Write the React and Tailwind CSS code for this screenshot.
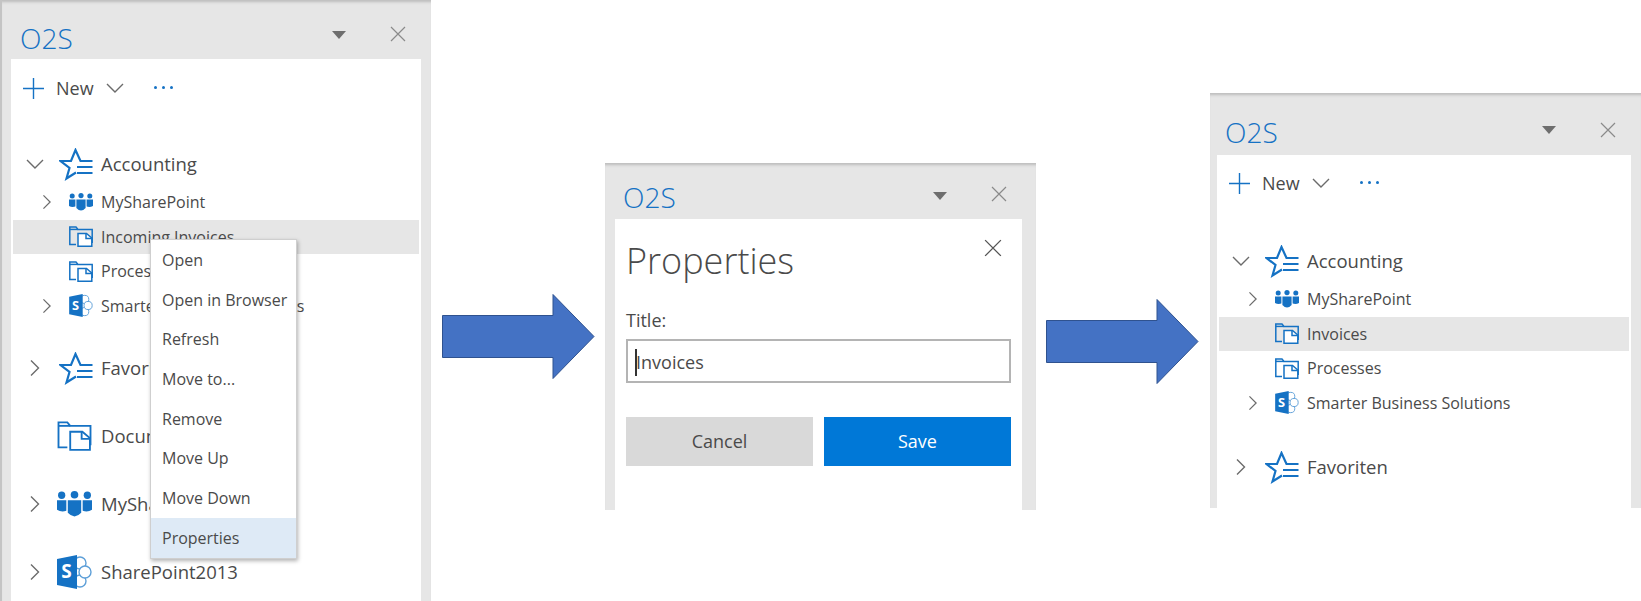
import React from 'react';

const font = { fontFamily: '"Open Sans", "Noto Sans", sans-serif' };

const Chevron = ({ dir = 'right', className = 'w-[18px] h-[18px]' }) => (
  <svg viewBox="0 0 18 18" className={`shrink-0 ${className}`} fill="none" stroke="#6b6b6b" strokeWidth="1.4">
    {dir === 'right' ? <path d="M5 1.5 L12.5 9 L5 16.5" /> : <path d="M1 5 L9 13 L17 5" />}
  </svg>
);

const Cross = ({ size = 16, color = '#8a8a8a' }) => (
  <svg viewBox="0 0 16 16" style={{ width: size, height: size }} fill="none" stroke={color} strokeWidth="1.2">
    <path d="M1 1 L15 15 M15 1 L1 15" />
  </svg>
);

const StarList = () => (
  <svg viewBox="0 0 34 33" className="w-[34px] h-[33px]" fill="none" stroke="#1572c4" strokeWidth="2.2">
    <path d="M33.5 13 H21.5 L16.5 2 L12 13 H1.5 L10.5 20 L7.5 30.5 L17 24.5" />
    <path d="M18 19 H33.5 M18 25 H33.5" />
  </svg>
);

const FolderDoc = ({ big }) => (
  <svg viewBox="0 0 24 21" className={big ? 'w-[35px] h-[30px] -ml-[2px]' : 'w-[24px] h-[21px]'} fill="none" stroke="#1572c4" strokeWidth={big ? 1.3 : 1.5}>
    <path d="M7 18.5 H0.8 V1 H7 L9 3.4 H23.2 V17" />
    <path d="M0.8 3.4 H9" />
    <path d="M9 7.5 H17.5 L22.8 12 V20.2 H9 Z" fill="#fff" />
    <path d="M17 7.5 V12.5 H22.8" />
  </svg>
);

const Team = ({ big }) => (
  <svg viewBox="0 0 24 18" className={big ? 'w-[35px] h-[28px] -ml-[2px]' : 'w-[24px] h-[18px]'} fill="#1572c4">
    <circle cx="3.2" cy="3" r="2.5" />
    <circle cx="12" cy="2.6" r="2.6" />
    <circle cx="20.8" cy="3" r="2.5" />
    <path d="M0 6.5 H6.4 V13.6 Q3 14.8 0 13 Z" />
    <path d="M7.4 6.5 H16.6 V15 Q12 20 7.4 15 Z" />
    <path d="M17.6 6.5 H24 V13 Q21 14.8 17.6 13.6 Z" />
  </svg>
);

const SharePoint = ({ big }) => (
  <svg viewBox="0 0 35 34" className={big ? 'w-[35px] h-[34px] -ml-[2px]' : 'w-[24px] h-[23px]'}>
    <g fill="#fff" stroke="#5d9fd8" strokeWidth="1.4">
      <circle cx="23" cy="8" r="6" />
      <circle cx="23" cy="26" r="6" />
      <circle cx="28" cy="17" r="6" />
    </g>
    <path d="M0 4 L20 0 V34 L0 30 Z" fill="#1572c4" />
    <text x="9.5" y="23" textAnchor="middle" fill="#fff" fontSize="19" fontWeight="700" style={font}>S</text>
  </svg>
);

const TopRow = ({ open, noArrow, icon, label, tall }) => (
  <div className={`flex items-center ${tall ? 'h-[68px]' : 'h-[40px]'}`}>
    <span className="w-[48px] flex pl-[15px]">{!noArrow && <Chevron dir={open ? 'down' : 'right'} />}</span>
    <span className="w-[42px] flex items-center">{icon}</span>
    <span className="text-[18.5px] text-[#4a4a4a] whitespace-nowrap">{label}</span>
  </div>
);

const ChildRow = ({ arrow, icon, label, active }) => (
  <div className={`flex items-center h-[34.5px] ${active ? 'bg-[#e6e6e6]' : ''}`}>
    <span className="w-[56px] flex justify-center pl-[12px]">{arrow && <Chevron className="w-[16px] h-[16px]" />}</span>
    <span className="w-[32px] flex items-center">{icon}</span>
    <span className="text-[16px] text-[#4a4a4a] whitespace-nowrap">{label}</span>
  </div>
);

const Toolbar = ({ sizeClass }) => (
  <div className={`flex items-start pl-[12px] ${sizeClass}`}>
    <svg viewBox="0 0 21 21" className="w-[21px] h-[21px]" fill="none" stroke="#1572c4" strokeWidth="1.4">
      <path d="M10.5 0 V21 M0 10.5 H21" />
    </svg>
    <span className="ml-[12px] text-[18px] leading-[20px] text-[#4a4a4a]">New</span>
    <Chevron dir="down" className="w-[18px] h-[18px] ml-[12px] mt-[1px]" />
    <span className="ml-[30px] mt-[8px] flex gap-[5px]">
      <i className="w-[3px] h-[3px] bg-[#1572c4] rounded-full" />
      <i className="w-[3px] h-[3px] bg-[#1572c4] rounded-full" />
      <i className="w-[3px] h-[3px] bg-[#1572c4] rounded-full" />
    </span>
  </div>
);

const ContextMenu = () => {
  const items = ['Open', 'Open in Browser', 'Refresh', 'Move to...', 'Remove', 'Move Up', 'Move Down', 'Properties'];
  return (
    <div className="absolute left-[148px] top-[239px] w-[147px] bg-white border border-[#cfcfcf] shadow-[1px_2px_4px_rgba(0,0,0,0.3)]">
      {items.map((item) => (
        <div key={item} className={`h-[39.7px] flex items-center pl-[11px] text-[16px] text-[#4a4a4a] ${item === 'Properties' ? 'bg-[#deeaf6]' : ''}`}>
          {item}
        </div>
      ))}
    </div>
  );
};

const Arrow = ({ className }) => (
  <svg viewBox="0 0 153 87" className={`w-[153px] h-[87px] shrink-0 ${className}`}>
    <path d="M0.5 22.5 H111 V1.5 L152 43.5 L111 85.5 V64.5 H0.5 Z" fill="#4472c4" stroke="#2f528f" strokeWidth="1" />
  </svg>
);

const panelShade = 'bg-[#e6e6e6] shadow-[inset_0_4px_3px_-2px_#bcbcbc]';
const triangle = 'ml-auto w-0 h-0 border-x-[7px] border-x-transparent border-t-[8px] border-t-[#6e6e6e]';
const brandTitle = 'text-[28px] font-light leading-none text-[#1572c4]';

export default function App() {
  return (
    <div className="flex items-start w-[1641px] h-[601px] overflow-hidden bg-white" style={font}>
      {/* first panel, with the context menu open */}
      <div className={`relative w-[431px] h-[601px] shrink-0 flex flex-col overflow-hidden border-l-2 border-l-[#c4c4c4] ${panelShade}`}>
        <div className="flex items-start h-[59px] shrink-0 pl-[18px]">
          <span className={`${brandTitle} mt-[24px]`}>O2S</span>
          <span className={`${triangle} mt-[31px]`} />
          <span className="ml-[44px] mt-[26px] mr-[25px]"><Cross /></span>
        </div>
        <div className="flex-1 ml-[9px] mr-[10px] bg-white">
          <Toolbar sizeClass="h-[85px] pt-[19px]" />
          <TopRow open icon={<StarList />} label="Accounting" />
          <div className="mx-[2px] mt-[1px]">
            <ChildRow arrow icon={<Team />} label="MySharePoint" />
            <ChildRow active icon={<FolderDoc />} label="Incoming Invoices" />
            <ChildRow icon={<FolderDoc />} label="Processes" />
            <ChildRow arrow icon={<SharePoint />} label="Smarter Business Solutions" />
          </div>
          <div className="mt-[11px]">
            <TopRow tall icon={<StarList />} label="Favoriten" />
            <TopRow tall noArrow icon={<FolderDoc big />} label="Documents" />
            <TopRow tall icon={<Team big />} label="MySharePoint" />
            <TopRow tall icon={<SharePoint big />} label="SharePoint2013" />
          </div>
        </div>
        <ContextMenu />
      </div>

      <Arrow className="ml-[11px] mt-[293px]" />

      {/* properties dialog */}
      <div className={`ml-[10px] mt-[163px] w-[431px] h-[347px] shrink-0 flex flex-col ${panelShade}`}>
        <div className="flex items-start h-[56px] shrink-0 pl-[18px]">
          <span className={`${brandTitle} mt-[20px]`}>O2S</span>
          <span className={`${triangle} mt-[29px]`} />
          <span className="ml-[44px] mt-[23px] mr-[29px]"><Cross /></span>
        </div>
        <div className="flex-1 ml-[10px] mr-[14px] bg-white px-[11px]">
          <div className="flex items-start justify-between h-[89px] pt-[18px]">
            <span className="text-[36px] font-light leading-[48px] text-[#4a4a4a]">Properties</span>
            <span className="mt-[2px] mr-[9px]"><Cross size={18} color="#555" /></span>
          </div>
          <label className="block text-[18px] leading-[24px] text-[#4a4a4a] h-[31px]">Title:</label>
          <div className="h-[44px] border-2 border-[#b4b4b4] flex items-center pl-[7px] pt-[3px]">
            <span className="w-[2px] h-[27px] bg-[#333] shrink-0 -mr-[1px]" />
            <span className="text-[18px] text-[#4a4a4a]">Invoices</span>
          </div>
          <div className="flex gap-[11px] mt-[34px]">
            <button className="flex-1 h-[49px] bg-[#d9d9d9] text-[18px] text-[#4a4a4a]">Cancel</button>
            <button className="flex-1 h-[49px] bg-[#0078d7] text-[18px] text-white">Save</button>
          </div>
        </div>
      </div>

      <Arrow className="ml-[10px] mt-[298px]" />

      {/* panel after the rename */}
      <div className={`ml-[11px] mt-[93px] w-[431px] h-[415px] shrink-0 flex flex-col overflow-hidden ${panelShade}`}>
        <div className="flex items-start h-[62px] shrink-0 pl-[15px]">
          <span className={`${brandTitle} mt-[25px]`}>O2S</span>
          <span className={`${triangle} mt-[33px]`} />
          <span className="ml-[44px] mt-[29px] mr-[25px]"><Cross /></span>
        </div>
        <div className="flex-1 ml-[7px] mr-[10px] bg-white">
          <Toolbar sizeClass="h-[86px] pt-[18px]" />
          <TopRow open icon={<StarList />} label="Accounting" />
          <div className="mx-[2px] mt-[1px]">
            <ChildRow arrow icon={<Team />} label="MySharePoint" />
            <ChildRow active icon={<FolderDoc />} label="Invoices" />
            <ChildRow icon={<FolderDoc />} label="Processes" />
            <ChildRow arrow icon={<SharePoint />} label="Smarter Business Solutions" />
          </div>
          <div className="mt-[13px]">
            <TopRow tall icon={<StarList />} label="Favoriten" />
          </div>
        </div>
      </div>
    </div>
  );
}
